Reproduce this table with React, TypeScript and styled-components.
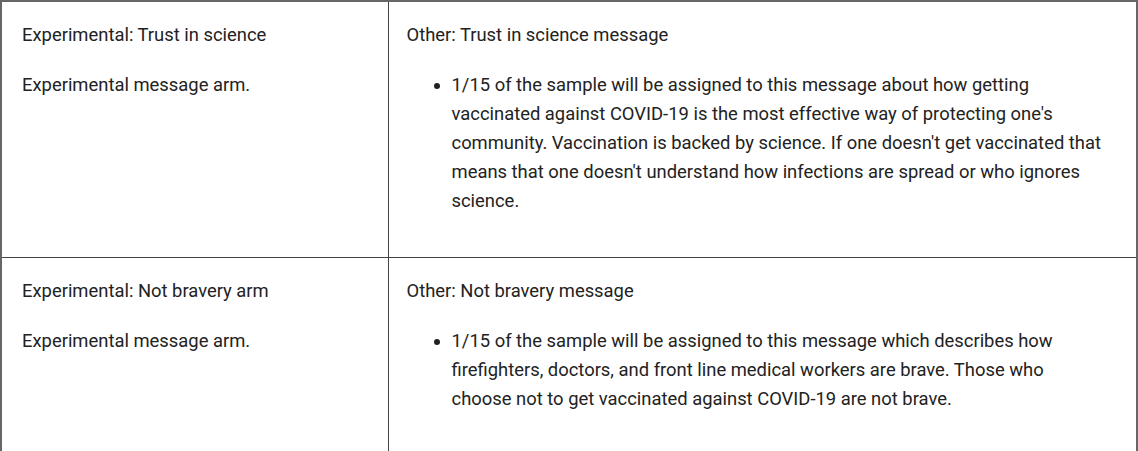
import React from "react";
import styled, { createGlobalStyle } from "styled-components";

interface Arm {
  id: number;
  label: string;
  description: string;
  title: string;
  bullets: string[];
}

const arms: Arm[] = [
  {
    id: 1,
    label: "Experimental: Trust in science",
    description: "Experimental message arm.",
    title: "Other: Trust in science message",
    bullets: [
      "1/15 of the sample will be assigned to this message about how getting vaccinated against COVID-19 is the most effective way of protecting one's community. Vaccination is backed by science. If one doesn't get vaccinated that means that one doesn't understand how infections are spread or who ignores science.",
    ],
  },
  {
    id: 2,
    label: "Experimental: Not bravery arm",
    description: "Experimental message arm.",
    title: "Other: Not bravery message",
    bullets: [
      "1/15 of the sample will be assigned to this message which describes how firefighters, doctors, and front line medical workers are brave. Those who choose not to get vaccinated against COVID-19 are not brave.",
    ],
  },
];

const GlobalStyle = createGlobalStyle`
  html, body {
    margin: 0;
    padding: 0;
    background: #fff;
  }
  body {
    font-family: Roboto, "Liberation Sans", sans-serif;
    color: #222;
  }
`;

const App: React.FC = () => {
  return (
    <>
      <GlobalStyle />
      <Table>
        <tbody>
          {arms.map((arm) => (
            <Row key={arm.id}>
              <LabelCell>
                <Para>{arm.label}</Para>
                <Para>{arm.description}</Para>
              </LabelCell>
              <DetailCell>
                <Para>{arm.title}</Para>
                <BulletList>
                  {arm.bullets.map((b, i) => (
                    <li key={i}>{b}</li>
                  ))}
                </BulletList>
              </DetailCell>
            </Row>
          ))}
        </tbody>
      </Table>
    </>
  );
};

export default App;

const Table = styled.table`
  width: 1138px;
  border-collapse: collapse;
  table-layout: fixed;
  border: 2px solid #666;
  border-bottom: none;
`;

const Row = styled.tr`
  border-bottom: 1px solid #444;

  &:last-child {
    border-bottom: none;
  }
`;

const Cell = styled.td`
  vertical-align: top;
  padding: 18px 18px 22px 20px;
  font-size: 18.4px;
  line-height: 29px;
  color: #222;
`;

const LabelCell = styled(Cell)`
  width: 387px;
  box-sizing: border-box;
  border-right: 1px solid #444;
`;

const DetailCell = styled(Cell)`
  padding-left: 18px;
  padding-right: 31px;
`;

const Para = styled.p`
  margin: 0 0 21px;
`;

const BulletList = styled.ul`
  margin: 0 0 20px;
  padding-left: 45px;
`;
